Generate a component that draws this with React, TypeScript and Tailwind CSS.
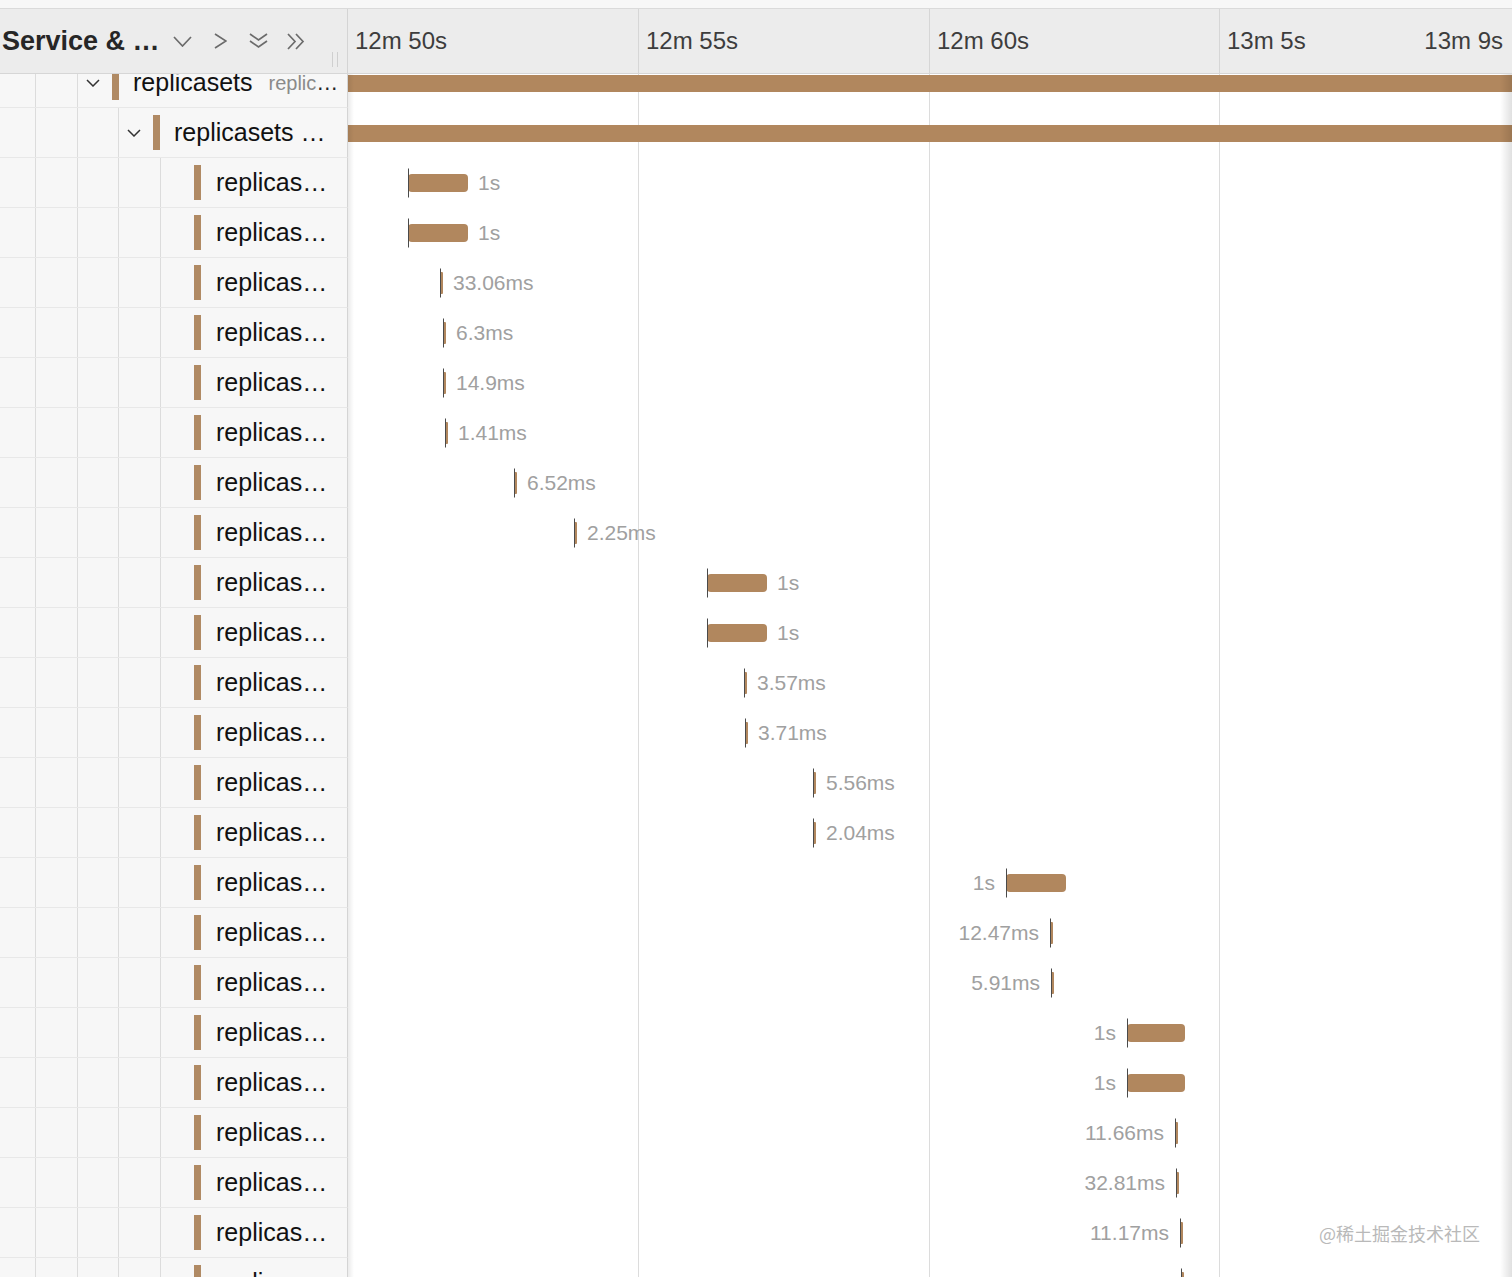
import React from "react";

type Span = { x: number; w: number; label: string; side: "l" | "r" };

const spans: Span[] = [
  { x: 60, w: 60, label: "1s", side: "r" },
  { x: 60, w: 60, label: "1s", side: "r" },
  { x: 92, w: 3, label: "33.06ms", side: "r" },
  { x: 95, w: 3, label: "6.3ms", side: "r" },
  { x: 95, w: 3, label: "14.9ms", side: "r" },
  { x: 97, w: 3, label: "1.41ms", side: "r" },
  { x: 166, w: 3, label: "6.52ms", side: "r" },
  { x: 226, w: 3, label: "2.25ms", side: "r" },
  { x: 359, w: 60, label: "1s", side: "r" },
  { x: 359, w: 60, label: "1s", side: "r" },
  { x: 396, w: 3, label: "3.57ms", side: "r" },
  { x: 397, w: 3, label: "3.71ms", side: "r" },
  { x: 465, w: 3, label: "5.56ms", side: "r" },
  { x: 465, w: 3, label: "2.04ms", side: "r" },
  { x: 658, w: 60, label: "1s", side: "l" },
  { x: 702, w: 3, label: "12.47ms", side: "l" },
  { x: 703, w: 3, label: "5.91ms", side: "l" },
  { x: 779, w: 58, label: "1s", side: "l" },
  { x: 779, w: 58, label: "1s", side: "l" },
  { x: 827, w: 3, label: "11.66ms", side: "l" },
  { x: 828, w: 3, label: "32.81ms", side: "l" },
  { x: 832, w: 3, label: "11.17ms", side: "l" },
  { x: 833, w: 3, label: "", side: "l" },
];

const TL_WIDTH = 1164;

function TreeChevron() {
  return (
    <svg width="14" height="8" viewBox="0 0 14 8" fill="none">
      <polyline points="1,1 7,7 13,1" stroke="#333" strokeWidth="1.5" />
    </svg>
  );
}

function Guides({ n }: { n: number }) {
  const widths = ["w-[36px]", "w-[42px]", "w-[41px]", "w-[42px]"];
  return (
    <>
      {widths.slice(0, n).map((w, i) => (
        <div key={i} className={`${w} h-full shrink-0 border-r border-[#dcdcdc]`} />
      ))}
    </>
  );
}

function SpanBar({ s }: { s: Span }) {
  const tiny = s.w < 10;
  const bar = (
    <div className="relative flex items-center shrink-0" style={{ width: s.w }}>
      <div
        className={`${tiny ? "h-[22px] rounded-[1px]" : "h-[18px] rounded-[4px]"} w-full bg-[#b1875e]`}
      />
      <div className="absolute left-0 top-1/2 -translate-y-1/2 w-px h-[29px] bg-[#4a4a4a]" />
    </div>
  );
  if (s.side === "r") {
    return (
      <div className="absolute inset-y-0 flex items-center" style={{ left: s.x }}>
        {bar}
        {s.label && <span className="ml-[10px] text-[21px] text-[#a0a0a0] whitespace-nowrap">{s.label}</span>}
      </div>
    );
  }
  return (
    <div className="absolute inset-y-0 flex items-center" style={{ right: TL_WIDTH - (s.x + s.w) }}>
      {s.label && <span className="mr-[11px] text-[21px] text-[#a0a0a0] whitespace-nowrap">{s.label}</span>}
      {bar}
    </div>
  );
}

export default function App() {
  return (
    <div className="w-[1512px] h-[1277px] overflow-hidden bg-white font-['Liberation_Sans',Arial,sans-serif] text-[#111]">
      {/* top strip */}
      <div className="h-[9px] bg-[#f7f7f7] border-b border-[#dadada]" />

      {/* header */}
      <div className="h-[65px] flex bg-[#ececec] border-b border-[#d6d6d6]">
        <div className="relative w-[348px] shrink-0 border-r border-[#d4d4d4] flex items-center pl-[2px]">
          <span className="w-[171px] shrink-0 text-[27px] font-bold text-[#262626] whitespace-nowrap">
            Service &amp; …
          </span>
          <svg width="19" height="11" viewBox="0 0 19 11" fill="none" className="shrink-0">
            <polyline points="1,1 9.5,10 18,1" stroke="#6b6b6b" strokeWidth="1.7" />
          </svg>
          <svg width="13" height="16" viewBox="0 0 13 16" fill="none" className="ml-[22px] shrink-0">
            <polyline points="1,1 12,8 1,15" stroke="#6b6b6b" strokeWidth="1.7" />
          </svg>
          <svg width="19" height="16" viewBox="0 0 19 16" fill="none" className="ml-[22px] shrink-0">
            <polyline points="1,1 9.5,7 18,1" stroke="#6b6b6b" strokeWidth="1.7" />
            <polyline points="1,8 9.5,14 18,8" stroke="#6b6b6b" strokeWidth="1.7" />
          </svg>
          <svg width="18" height="17" viewBox="0 0 18 17" fill="none" className="ml-[19px] shrink-0">
            <polyline points="1,1 8,8.5 1,16" stroke="#6b6b6b" strokeWidth="1.7" />
            <polyline points="9,1 16,8.5 9,16" stroke="#6b6b6b" strokeWidth="1.7" />
          </svg>
          <div className="absolute right-[9px] bottom-[6px] flex gap-[4px]">
            <div className="w-px h-[15px] bg-[#cfcfcf]" />
            <div className="w-px h-[15px] bg-[#cfcfcf]" />
          </div>
        </div>
        <div className="flex-1 flex text-[24px] text-[#3d3d3d]">
          <div className="w-[290px] flex items-center pl-[7px]">12m 50s</div>
          <div className="w-[291px] flex items-center pl-[7px] border-l border-[#d6d6d6]">12m 55s</div>
          <div className="w-[290px] flex items-center pl-[7px] border-l border-[#d6d6d6]">12m 60s</div>
          <div className="flex-1 flex items-center justify-between pl-[7px] pr-[9px] border-l border-[#d6d6d6]">
            <span>13m 5s</span>
            <span>13m 9s</span>
          </div>
        </div>
      </div>

      {/* body */}
      <div className="relative h-[1203px] overflow-hidden">
        {/* timeline grid */}
        <div className="absolute left-[348px] right-0 inset-y-0 flex pointer-events-none">
          <div className="w-[290px]" />
          <div className="w-[291px] border-l border-[#dcdcdc]" />
          <div className="w-[290px] border-l border-[#dcdcdc]" />
          <div className="flex-1 border-l border-[#dcdcdc]" />
        </div>

        <div className="relative -mt-[16px]">
          {/* row 0 */}
          <div className="flex h-[50px]">
            <div className="w-[348px] shrink-0 h-full flex bg-[#f7f7f7] border-b border-r border-[#e8e8e8] border-r-[#d4d4d4]">
              <Guides n={2} />
              <div className="flex items-center min-w-0">
                <div className="w-[30px] flex justify-center shrink-0"><TreeChevron /></div>
                <div className="ml-[4px] w-[7px] h-[35px] bg-[#b08a64] shrink-0" />
                <span className="ml-[14px] text-[25px] whitespace-nowrap">replicasets</span>
                <span className="ml-[16px] text-[20px] text-[#8a8a8a] whitespace-nowrap">replic</span>
                <span className="text-[22px] text-[#222]">…</span>
              </div>
            </div>
            <div className="relative flex-1 flex items-center">
              <div className="w-full h-[17px] bg-[#b1875e]" />
            </div>
          </div>

          {/* row 1 */}
          <div className="flex h-[50px]">
            <div className="w-[348px] shrink-0 h-full flex bg-[#f7f7f7] border-b border-r border-[#e8e8e8] border-r-[#d4d4d4]">
              <Guides n={3} />
              <div className="flex items-center min-w-0">
                <div className="w-[30px] flex justify-center shrink-0"><TreeChevron /></div>
                <div className="ml-[4px] w-[7px] h-[35px] bg-[#b08a64] shrink-0" />
                <span className="ml-[14px] text-[25px] whitespace-nowrap">replicasets …</span>
              </div>
            </div>
            <div className="relative flex-1 flex items-center">
              <div className="w-full h-[17px] bg-[#b1875e]" />
            </div>
          </div>

          {spans.map((s, i) => (
            <div key={i} className="flex h-[50px]">
              <div className="w-[348px] shrink-0 h-full flex bg-[#f7f7f7] border-b border-r border-[#e8e8e8] border-r-[#d4d4d4]">
                <Guides n={4} />
                <div className="flex items-center min-w-0">
                  <div className="w-[30px] shrink-0" />
                  <div className="ml-[3px] w-[7px] h-[35px] bg-[#b08a64] shrink-0" />
                  <span className="ml-[15px] text-[25px] whitespace-nowrap">replicas…</span>
                </div>
              </div>
              <div className="relative flex-1 h-full">
                <SpanBar s={s} />
              </div>
            </div>
          ))}
        </div>

        {/* shadows */}
        <div className="absolute left-[348px] inset-y-0 w-[6px] bg-gradient-to-r from-[rgba(0,0,0,0.08)] to-transparent pointer-events-none" />
        <div className="absolute right-0 inset-y-0 w-[12px] bg-gradient-to-r from-transparent to-[rgba(0,0,0,0.12)] pointer-events-none" />

        {/* watermark */}
        <div className="absolute right-[32px] bottom-[30px] text-[18px] text-[#b9b9b9] font-['Noto_Sans_CJK_SC',sans-serif] pointer-events-none">
          @稀土掘金技术社区
        </div>
      </div>
    </div>
  );
}
